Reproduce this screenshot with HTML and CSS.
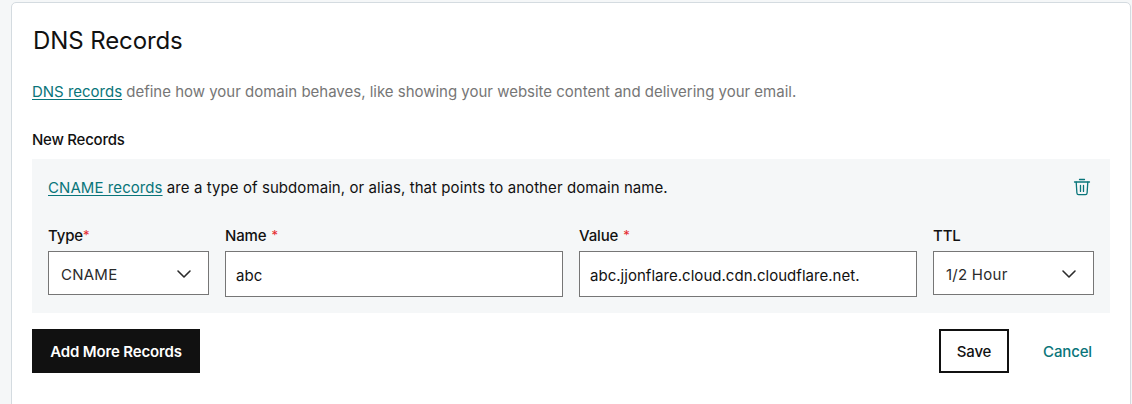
FILE: index.html
```html
<!DOCTYPE html>
<html lang="en">
<head>
<meta charset="utf-8">
<title>DNS Records</title>
<link rel="stylesheet" href="styles.css">
</head>
<body>
<main class="card">
  <h1 class="title">DNS Records</h1>
  <p class="intro"><a class="link" href="#">DNS records</a> define how your domain behaves, like showing your website content and delivering your email.</p>
  <h2 class="subtitle">New Records</h2>
  <section class="panel">
    <div class="panel-head">
      <p class="hint"><a class="link" href="#">CNAME records</a> are a type of subdomain, or alias, that points to another domain name.</p>
      <button class="trash" aria-label="Delete">
        <svg width="18" height="18" viewBox="0 0 18 18" fill="none" stroke="currentColor" stroke-linecap="round" stroke-linejoin="round"><path d="M6.5 1.5h5M1.5 4h15" stroke-width="1.3"/><path d="M3.2 4.2l.7 10.8c.1 1.1.6 1.6 1.6 1.6h7c1 0 1.5-.5 1.6-1.6l.7-10.8M7.5 7.4v6M10.5 7.4v6" stroke-width="1.3"/></svg>
      </button>
    </div>
    <div class="fields">
      <div class="field">
        <label class="label">Type<span class="star">*</span></label>
        <div class="select"><span class="wide">CNAME</span><svg class="chevron" width="16" height="10" viewBox="0 0 16 10" fill="none" stroke="#2b2b2b" stroke-width="1.6" stroke-linecap="round" stroke-linejoin="round"><path d="M2 2l6 6 6-6"/></svg></div>
      </div>
      <div class="field">
        <label class="label">Name<span class="star spaced">*</span></label>
        <div class="input">abc</div>
      </div>
      <div class="field">
        <label class="label">Value<span class="star spaced">*</span></label>
        <div class="input">abc.jjonflare.cloud.cdn.cloudflare.net.</div>
      </div>
      <div class="field">
        <label class="label">TTL</label>
        <div class="select"><span class="wide">1/2 Hour</span><svg class="chevron" width="16" height="10" viewBox="0 0 16 10" fill="none" stroke="#2b2b2b" stroke-width="1.6" stroke-linecap="round" stroke-linejoin="round"><path d="M2 2l6 6 6-6"/></svg></div>
      </div>
    </div>
  </section>
  <div class="actions">
    <button class="btn primary">Add More Records</button>
    <button class="btn secondary">Save</button>
    <button class="btn plain">Cancel</button>
  </div>
</main>
</body>
</html>
```
FILE: styles.css
```css
* { box-sizing: border-box; }
body {
  margin: 0;
  height: 404px;
  overflow: hidden;
  padding: 2px 1px 0 11px;
  background: #f5f7f8;
  color: #111;
  font: 400 15px/24px Inter, "Liberation Sans", sans-serif;
}
h1, h2, p { margin: 0; white-space: nowrap; }
.card {
  height: 420px;
  padding: 20px 20px 0;
  background: #fff;
  border: 1px solid #d4dbe0;
  border-radius: 5px;
}
.title { height: 36px; font-size: 24px; line-height: 36px; font-weight: 400; letter-spacing: -0.1px; padding-left: 1px; }
.intro { margin-top: 21px; color: #767676; letter-spacing: -0.01px; }
.link { color: #09757a; text-decoration: underline; text-underline-offset: 2px; }
.subtitle { margin-top: 24px; font-size: 15px; line-height: 24px; font-weight: 550; letter-spacing: -0.25px; }
.panel { height: 154px; margin-top: 7px; padding: 16px; background: #f5f7f8; }
.panel-head { display: flex; justify-content: space-between; height: 24px; }
.hint { padding-top: 1px; letter-spacing: 0.075px; }
.trash { width: 24px; height: 24px; padding: 3px; border: 0; background: none; color: #09757a; }
.trash svg { display: block; }
.fields { display: grid; grid-template-columns: 161px 338px 338px 161px; gap: 16px; margin-top: 24px; }
.label { display: flex; height: 28px; padding-top: 1px; font-weight: 550; letter-spacing: -0.15px; }
.star { color: #e5282e; font-weight: 400; font-size: 13px; line-height: 23px; }
.spaced { margin-left: 5px; }
.select, .input { display: flex; align-items: center; background: #fff; border: 1px solid #767676; white-space: nowrap; }
.select { height: 44px; justify-content: space-between; padding: 3px 16px 0 12px; color: #2b2b2b; }
.wide { letter-spacing: 0.25px; }
.input { height: 46px; padding: 3px 10px 0; letter-spacing: 0.03px; }
.chevron { margin-top: -2px; }
.actions { display: flex; margin-top: 16px; }
.btn { height: 44px; padding: 2px 0 0; border: 0; border-radius: 0; font: inherit; font-weight: 550; letter-spacing: -0.15px; white-space: nowrap; }
.primary { width: 168px; background: #111; color: #fff; font-weight: 600; }
.secondary { width: 70px; margin-left: auto; border: 2px solid #111; background: #fff; color: #111; }
.plain { width: 101px; padding-left: 16px; background: none; color: #09757a; }
```
